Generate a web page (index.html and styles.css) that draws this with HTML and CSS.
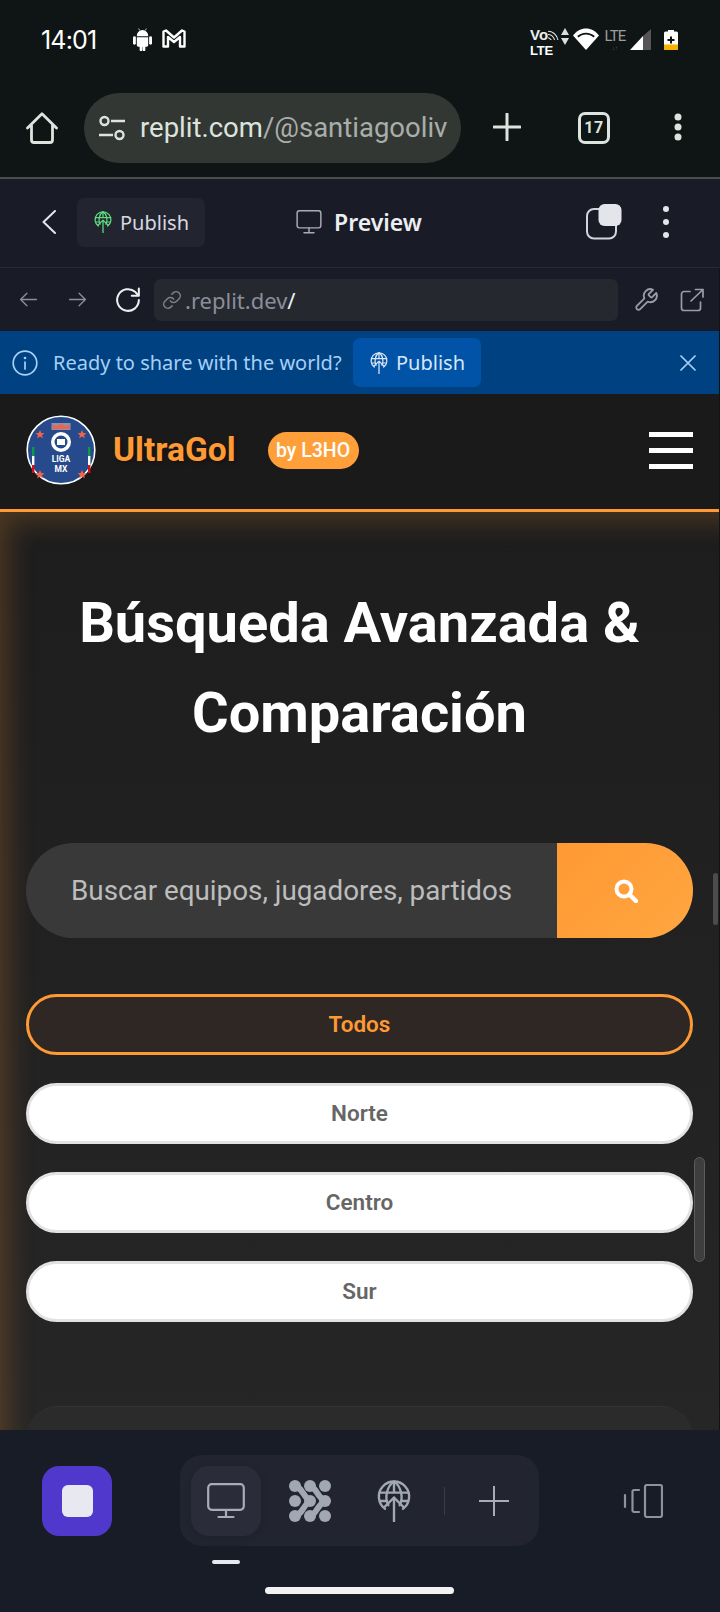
FILE: index.html
```html
<!DOCTYPE html>
<html lang="es">
<head>
<meta charset="utf-8">
<title>UltraGol</title>
<link rel="stylesheet" href="styles.css">
</head>
<body>
<svg class="defs" width="0" height="0" aria-hidden="true">
  <symbol id="globe-up" viewBox="0 0 24 30">
    <g fill="none" stroke="currentColor" stroke-width="1.7" stroke-linecap="round" stroke-linejoin="round">
      <path d="M5.6 20.6A10.8 10.8 0 1 1 18.4 20.6"/>
      <path d="M8 18C5 13 7 4 12 1.2 17 4 19 13 16 18"/>
      <path d="M12 1.2V9M1.6 9H22.4M2 15H7M17 15H22"/>
      <path d="M12 29.500V12.500M5 19.500 12 12.500l7 7"/>
    </g>
  </symbol>
  <symbol id="monitor" viewBox="0 0 38 36">
    <g fill="none" stroke="currentColor" stroke-width="2.2" stroke-linecap="round" stroke-linejoin="round">
      <rect x="1.2" y="1.2" width="35.6" height="25.6" rx="3.5"/>
      <path d="M19 27v6.5M11.5 34h15"/>
    </g>
  </symbol>
</svg>

<div class="phone">
  <header class="status">
    <span class="time">14:01</span>
    <svg class="ic-android" viewBox="0 0 20 24"><path fill="#fff" d="M4 8a6 6 0 0 1 12 0v.5H4zM4 9.500h12V18a1.500 1.500 0 0 1-1.500 1.500H13V23a1.400 1.400 0 0 1-2.800 0v-3.500H9.800V23A1.400 1.400 0 0 1 7 23v-3.500H5.500A1.500 1.500 0 0 1 4 18z"/><rect fill="#fff" x="0" y="8.500" width="3" height="9" rx="1.500"/><rect fill="#fff" x="17" y="8.500" width="3" height="9" rx="1.500"/><path stroke="#fff" stroke-width=".8" d="M6 .5 7 2.500M14 .5 13 2.500"/></svg>
    <svg class="ic-m" viewBox="0 0 24 19"><path fill="none" stroke="#fff" stroke-width="2.400" stroke-linejoin="round" d="M1.500 17.500V2.500L4 1.500l8 7 8-7 2.500 1v15h-4.500V8l-6 5-6-5v9.500z"/></svg>
    <div class="status-right">
      <div class="volte"><span class="vo">Vo<svg class="ic-cast" viewBox="0 0 10 10"><path fill="none" stroke="#ddd" stroke-width="1" d="M0 2c4 0 8 3 9 8M0 5c3 0 5 2 6 5M0 8c1 0 2 1 3 2"/></svg></span><span class="lte">LTE</span></div>
      <svg class="ic-updown" viewBox="0 0 8 17"><path fill="#ddd" d="M4 0l4 7H0zM0 10h8l-4 7z"/></svg>
      <svg class="ic-wifi" viewBox="0 0 26 22"><path fill="#fff" d="M13 22 0 7.500C3.500 3 8 .5 13 .5s9.500 2.500 13 7z"/><path fill="#0f1514" d="M13 4.800c-3.300 0-6.500 1.300-8.800 3.200l1.300 1.500C7.500 7.700 10.200 6.500 13 6.500s5.500 1.200 7.500 3l1.300-1.500C19.500 6.100 16.300 4.800 13 4.800z"/></svg>
      <div class="lte2"><span>LTE</span><i>↓↑</i></div>
      <svg class="ic-signal" viewBox="0 0 21 21"><path fill="#555" d="M21 0v21H13V7z"/><path fill="#fff" d="M13 7v14H0z"/></svg>
      <svg class="ic-batt" viewBox="0 0 14 20"><path fill="#fff" d="M4 0h6v1.500h2.500A1.500 1.500 0 0 1 14 3v15.500a1.500 1.500 0 0 1-1.500 1.500h-11A1.500 1.500 0 0 1 0 18.500V3a1.500 1.500 0 0 1 1.500-1.500H4z"/><path fill="#f5b400" d="M0 14.500h14v4a1.500 1.500 0 0 1-1.500 1.500h-11A1.500 1.500 0 0 1 0 18.500z"/><path fill="#111" d="M6 6.500h2v2.500h2.500v2H8v2.500H6V11H3.500V9H6z"/></svg>
    </div>
  </header>

  <div class="chrome">
    <svg class="ic-home" viewBox="0 0 32 32"><path fill="none" stroke="#dde3dd" stroke-width="2.800" stroke-linejoin="round" stroke-linecap="round" d="M1.500 16 16 1.800 30.500 16M5.500 13.500V28a2.500 2.500 0 0 0 2.500 2.500h16a2.500 2.500 0 0 0 2.500-2.500V13.500"/></svg>
    <div class="omnibox">
      <svg class="ic-tune" viewBox="0 0 26 26"><g fill="none" stroke="#dde3dd" stroke-width="2.400"><circle cx="5.500" cy="6" r="4"/><circle cx="20.500" cy="20" r="4"/><path d="M12 6h14M0 20h14"/></g></svg>
      <span class="url"><span class="url-host">replit.com</span>/@santiagooliv</span>
    </div>
    <svg class="ic-plus" viewBox="0 0 28 28"><path stroke="#dde3dd" stroke-width="3" stroke-linecap="round" d="M14 1v26M1 14h26"/></svg>
    <span class="tabs">17</span>
    <svg class="ic-dots" viewBox="0 0 8 28"><circle fill="#dde3dd" cx="4" cy="4" r="3.500"/><circle fill="#dde3dd" cx="4" cy="14" r="3.500"/><circle fill="#dde3dd" cx="4" cy="24" r="3.500"/></svg>
  </div>

  <div class="rp-bar">
    <svg class="ic-back" viewBox="0 0 14 24"><path fill="none" stroke="#e4e5ea" stroke-width="2" stroke-linecap="round" stroke-linejoin="round" d="M13 1 1.500 12 13 23"/></svg>
    <div class="rp-publish"><svg class="ic-globe green"><use href="#globe-up"/></svg><span>Publish</span></div>
    <div class="rp-preview"><svg class="ic-mon"><use href="#monitor"/></svg><span>Preview</span></div>
    <svg class="ic-tabs" viewBox="0 0 36 36"><rect x="1" y="5" width="29" height="29.500" rx="7" fill="none" stroke="#d4d5dc" stroke-width="2"/><rect x="12.500" y="0" width="23" height="22" rx="6" fill="#e4e5ea"/></svg>
    <svg class="ic-dots2" viewBox="0 0 6 32"><circle fill="#e4e5ea" cx="3" cy="3" r="3"/><circle fill="#e4e5ea" cx="3" cy="16" r="3"/><circle fill="#e4e5ea" cx="3" cy="29" r="3"/></svg>
  </div>

  <div class="rp-nav">
    <svg class="ic-nav" viewBox="0 0 24 24"><path fill="none" stroke="#8b8e99" stroke-width="1.700" stroke-linecap="round" stroke-linejoin="round" d="M22 12H2M10 4 2 12l8 8"/></svg>
    <svg class="ic-nav fwd" viewBox="0 0 24 24"><path fill="none" stroke="#8b8e99" stroke-width="1.700" stroke-linecap="round" stroke-linejoin="round" d="M2 12h20M14 4l8 8-8 8"/></svg>
    <svg class="ic-reload" viewBox="0 0 24 24"><path fill="none" stroke="#eeeef2" stroke-width="1.900" stroke-linecap="round" stroke-linejoin="round" d="M22 12a10 10 0 1 1-3.200-7.300L22 8M22 1.500V8h-6.500"/></svg>
    <div class="rp-url">
      <svg class="ic-link" viewBox="0 0 24 24"><path fill="none" stroke="#7d808b" stroke-width="1.800" stroke-linecap="round" d="M10 13a5 5 0 0 0 7.540.54l3-3a5 5 0 0 0-7.070-7.070l-1.720 1.710M14 11a5 5 0 0 0-7.540-.54l-3 3a5 5 0 0 0 7.070 7.070l1.710-1.710"/></svg>
      <span class="rp-dom">.replit.dev<b>/</b></span>
    </div>
    <svg class="ic-wrench" viewBox="0 0 24 24"><path fill="none" stroke="#9a9da8" stroke-width="1.700" stroke-linecap="round" stroke-linejoin="round" d="M14.700 6.300a1 1 0 0 0 0 1.400l1.600 1.600a1 1 0 0 0 1.400 0l3.770-3.770a6 6 0 0 1-7.940 7.940l-6.910 6.910a2.120 2.120 0 0 1-3-3l6.910-6.910a6 6 0 0 1 7.940-7.940z"/></svg>
    <svg class="ic-ext" viewBox="0 0 24 24"><path fill="none" stroke="#9a9da8" stroke-width="1.700" stroke-linecap="round" stroke-linejoin="round" d="M10 3.500H4A2.500 2.500 0 0 0 1.500 6v14A2.500 2.500 0 0 0 4 22.500h14a2.500 2.500 0 0 0 2.500-2.500v-6M11 13 23 1.500M15.500 1.500H23V9"/></svg>
  </div>

  <div class="notice">
    <svg class="ic-info" viewBox="0 0 26 26"><g fill="none" stroke="#a6d0f5" stroke-width="1.700" stroke-linecap="round"><circle cx="13" cy="13" r="11.800"/><path d="M13 12v7"/></g><circle fill="#a6d0f5" cx="13" cy="8" r="1.300"/></svg>
    <span class="notice-text">Ready to share with the world?</span>
    <div class="notice-btn"><svg class="ic-globe pale"><use href="#globe-up"/></svg><span>Publish</span></div>
    <svg class="ic-close" viewBox="0 0 16 16"><path stroke="#a6d0f5" stroke-width="1.700" stroke-linecap="round" d="M1 1l14 14M15 1 1 15"/></svg>
  </div>

  <div class="site-header">
    <svg class="logo" viewBox="0 0 70 70">
      <circle cx="35" cy="35" r="33.800" fill="#264a8c" stroke="#fff" stroke-width="1.600"/>
      <rect x="25.500" y="8" width="19" height="7" fill="#8a93b5"/>
      <path fill="#f0634a" d="M26.500 14V9l4 2.500L35 8.500l4.500 3 4-2.500v5z"/>
      <path fill="#f0634a" d="M14 15l1.300 3 3.200.2-2.500 2 .9 3.100-2.900-1.800-2.900 1.800.9-3.100-2.500-2 3.200-.2zM56 15l1.300 3 3.200.2-2.500 2 .9 3.100-2.900-1.800-2.900 1.800.9-3.100-2.500-2 3.200-.2zM14 55l1.300 3 3.200.2-2.500 2 .9 3.100-2.900-1.800-2.900 1.800.9-3.100-2.500-2 3.200-.2zM56 55l1.300 3 3.200.2-2.500 2 .9 3.100-2.900-1.800-2.900 1.800.9-3.100-2.500-2 3.200-.2z"/>
      <circle cx="35" cy="27" r="10" fill="#fff"/>
      <circle cx="35" cy="27" r="6.500" fill="#264a8c"/>
      <rect x="31" y="24" width="8" height="6" fill="#fff"/>
      <rect x="6" y="32" width="2.400" height="9" fill="#0a9a4a"/><rect x="6" y="41" width="2.400" height="9" fill="#fff"/><rect x="6" y="50" width="2.400" height="8" fill="#d5101c"/>
      <rect x="62" y="32" width="2.400" height="9" fill="#0a9a4a"/><rect x="62" y="41" width="2.400" height="9" fill="#fff"/><rect x="62" y="50" width="2.400" height="8" fill="#d5101c"/>
      <text class="logo-t" x="35" y="47" text-anchor="middle">LIGA</text>
      <text class="logo-t" x="35" y="57" text-anchor="middle">MX</text>
    </svg>
    <span class="brand">UltraGol</span>
    <span class="badge">by L3HO</span>
    <div class="burger"><i></i><i></i><i></i></div>
  </div>

  <main class="content">
    <h1 class="title">Búsqueda Avanzada &amp; Comparación</h1>
    <div class="search">
      <span class="search-ph">Buscar equipos, jugadores, partidos</span>
      <div class="search-btn"><svg class="ic-search" viewBox="0 0 24 24"><circle cx="10" cy="10" r="7.500" fill="none" stroke="#fff" stroke-width="4"/><path stroke="#fff" stroke-width="4.500" stroke-linecap="round" d="M16 16l6 6"/></svg></div>
    </div>
    <div class="filters">
      <button class="chip chip-on">Todos</button>
      <button class="chip">Norte</button>
      <button class="chip">Centro</button>
      <button class="chip">Sur</button>
    </div>
    <div class="card"></div>
    <i class="thumb thumb-a"></i>
    <i class="thumb thumb-b"></i>
  </main>

  <footer class="dock">
    <div class="dock-row">
      <div class="stop"><i></i></div>
      <div class="tools">
        <div class="tool tool-on"><svg class="ic-tool-mon"><use href="#monitor"/></svg></div>
        <div class="tool">
          <svg class="ic-agent" viewBox="0 0 42 42">
            <g fill="#a1a7b3"><circle cx="6" cy="21" r="6"/><circle cx="36" cy="6" r="6"/><circle cx="36" cy="36" r="6"/><circle cx="6" cy="6" r="6"/><circle cx="6" cy="36" r="6"/><circle cx="21" cy="6" r="6"/><circle cx="21" cy="36" r="6"/><circle cx="36" cy="21" r="6"/><circle cx="21" cy="21" r="6"/></g>
            <g fill="none" stroke="#a1a7b3" stroke-width="6" stroke-linecap="round"><path d="M6 6C14 8 12 14 21 21 12 28 14 34 6 36"/><path d="M21 6C28 8 27 16 36 21 27 26 28 34 21 36"/></g>
          </svg>
        </div>
        <div class="tool"><svg class="ic-tool-globe"><use href="#globe-up"/></svg></div>
        <i class="sep"></i>
        <svg class="ic-tool-plus" viewBox="0 0 30 30"><path stroke="#a9acb6" stroke-width="2" stroke-linecap="round" d="M15 0v30M0 15h30"/></svg>
      </div>
      <svg class="ic-device" viewBox="0 0 40 34"><g fill="none" stroke="#8f929d" stroke-width="2.200" stroke-linecap="round" stroke-linejoin="round"><rect x="22" y="1" width="17" height="32" rx="2"/><path d="M16 6h-5a1.500 1.500 0 0 0-1.500 1.500v19A1.500 1.500 0 0 0 11 28h5M2 11v12"/></g></svg>
    </div>
    <i class="tab-mark"></i>
    <i class="home-bar"></i>
  </footer>
</div>
</body>
</html>
```

FILE: styles.css
```css
* { box-sizing: border-box; }
html, body { margin: 0; padding: 0; background: #0f1514; }
svg { display: block; flex: none; }
.defs { position: absolute; }
i { display: block; font-style: normal; }

.phone {
  width: 720px;
  height: 1612px;
  display: flex;
  flex-direction: column;
  overflow: hidden;
  position: relative;
  font-family: "Noto Sans", sans-serif;
}

/* Android status bar */
.status {
  height: 93px;
  flex: none;
  display: flex;
  align-items: flex-start;
  padding: 27px 42px 0 41px;
  color: #fff;
}
.time { font: 400 25px/26px Inter, sans-serif; letter-spacing: -0.8px; width: 92px; }
.ic-android { width: 19px; height: 23px; margin-top: 1px; }
.ic-m { width: 24px; height: 19px; margin: 2px 0 0 10px; }
.status-right { margin-left: auto; display: flex; align-items: flex-start; }
.volte { width: 31px; display: flex; flex-direction: column; font: 700 15px/14px "Liberation Sans", sans-serif; }
.vo { display: flex; align-items: center; height: 15px; color: #eee; }
.ic-cast { width: 11px; height: 11px; margin-left: 0; }
.lte { font-size: 13px; line-height: 13px; margin-top: 2px; letter-spacing: -.2px; color: #fff; }
.ic-updown { width: 8px; height: 17px; margin-top: 1px; }
.ic-wifi { width: 26px; height: 22px; margin: 1px 0 0 4px; }
.lte2 { width: 22px; margin: 2px 4px 0 5px; display: flex; flex-direction: column; align-items: center; font: 400 15px/14px Roboto, sans-serif; letter-spacing: -.8px; color: #9a9d9c; }
.lte2 i { font-size: 6px; line-height: 7px; letter-spacing: 0; color: #555; margin-top: 1px; }
.ic-signal { width: 21px; height: 21px; margin: 2px 0 0 0; }
.ic-batt { width: 14px; height: 20px; margin: 3px 0 0 13px; }

/* Browser toolbar */
.chrome {
  height: 86px;
  flex: none;
  display: flex;
  align-items: flex-start;
  padding-left: 26px;
  border-bottom: 2px solid #4a4f4b;
}
.ic-home { width: 32px; height: 32px; margin-top: 19px; }
.omnibox {
  width: 377px;
  height: 70px;
  margin-left: 26px;
  border-radius: 35px;
  background: #323733;
  display: flex;
  align-items: center;
  padding-left: 15px;
  overflow: hidden;
}
.ic-tune { width: 26px; height: 26px; }
.url { margin-left: 15px; width: 308px; overflow: hidden; white-space: nowrap; font: 400 27.500px/34px Roboto, sans-serif; color: #a9aeaa; }
.url-host { color: #dde3dd; }
.ic-plus { width: 28px; height: 28px; margin: 20px 0 0 32px; }
.tabs {
  width: 32px;
  height: 32px;
  margin: 19px 0 0 57px;
  border: 3px solid #dde3dd;
  border-radius: 7px;
  color: #dde3dd;
  font: 700 16px/26px Roboto, sans-serif;
  letter-spacing: .6px;
  text-align: center;
}
.ic-dots { width: 8px; height: 28px; margin: 20px 0 0 64px; }

/* Replit header */
.rp-bar {
  height: 89px;
  flex: none;
  display: flex;
  align-items: center;
  padding: 0 0 2px 42px;
  background: #191c26;
  border-bottom: 1px solid #262935;
}
.ic-back { width: 14px; height: 24px; }
.rp-publish {
  width: 128px;
  height: 49px;
  margin-left: 21px;
  display: flex;
  align-items: center;
  gap: 8px;
  padding-left: 17px;
  border-radius: 7px;
  background: #22252f;
  color: #d6d8e0;
  font-size: 20px;
}
.ic-globe { width: 18px; height: 22px; }
.green { color: #5fdc80; }
.pale { color: #dbe6f5; }
.rp-preview { display: flex; align-items: center; gap: 12px; margin-left: 91px; color: #eceef2; font-size: 23px; font-weight: 600; }
.ic-mon { width: 26px; height: 24px; color: #a9acb6; }
.ic-tabs { width: 36px; height: 36px; margin-left: 164px; }
.ic-dots2 { width: 6px; height: 32px; margin-left: 41px; }

/* Replit webview nav */
.rp-nav {
  height: 63px;
  flex: none;
  display: flex;
  align-items: center;
  padding-left: 19px;
  background: #191c26;
  margin-right: 1px;
}
.ic-nav { width: 19px; height: 19px; }
.fwd { margin-left: 30px; }
.ic-reload { width: 26px; height: 26px; margin-left: 28px; }
.rp-url {
  width: 464px;
  height: 42px;
  margin-left: 13px;
  display: flex;
  align-items: center;
  padding-left: 8px;
  border-radius: 7px;
  background: #262830;
}
.ic-link { width: 20px; height: 20px; }
.rp-dom { margin-left: 3px; color: #8b8e99; font-size: 22px; }
.rp-dom b { font-weight: 400; color: #eceef2; }
.ic-wrench { width: 26px; height: 26px; margin-left: 15px; }
.ic-ext { width: 24px; height: 24px; margin-left: 21px; }

/* Publish notice */
.notice {
  height: 63px;
  flex: none;
  display: flex;
  align-items: center;
  padding-left: 12px;
  background: #004182;
  margin-right: 1px;
}
.ic-info { width: 26px; height: 26px; }
.notice-text { margin-left: 15px; width: 300px; white-space: nowrap; font-size: 20px; color: #a6d0f5; }
.notice-btn {
  width: 128px;
  height: 49px;
  display: flex;
  align-items: center;
  gap: 8px;
  padding-left: 17px;
  border-radius: 7px;
  background: #0053a6;
  color: #d7e6f7;
  font-size: 20px;
}
.ic-close { width: 16px; height: 16px; margin-left: 199px; }

/* Site header */
.site-header {
  height: 118px;
  flex: none;
  display: flex;
  align-items: center;
  padding: 0 26px 3px 26px;
  margin-right: 1px;
  background: #1a1a1a;
  border-bottom: 3px solid #ff9933;
}
.logo { width: 70px; height: 70px; margin-top: -1px; }
.logo-t { font: 700 8.500px Roboto, sans-serif; fill: #fff; }
.brand {
  margin-left: 17px;
  font: 700 33.500px/40px Roboto, sans-serif;
  color: #ff9933;
  text-shadow: 2px 2px 4px rgba(0,0,0,.3);
}
.badge {
  margin-left: 32px;
  width: 91px;
  height: 37px;
  border-radius: 19px;
  background: #ff9f3a;
  color: #fff;
  font: 500 19.500px/37px Roboto, sans-serif;
  text-align: center;
}
.burger { margin-left: auto; width: 44px; display: flex; flex-direction: column; gap: 11px; }
.burger i { height: 5px; background: #fff; }

/* Page */
.content {
  flex: 1;
  min-height: 0;
  overflow: hidden;
  position: relative;
  margin-right: 1px;
  padding: 66px 26px 0 26px;
  background: linear-gradient(180deg, #1d1d1d 0%, #262626 100%);
  box-shadow: inset 24px 24px 28px -16px rgba(255,153,51,.22);
}
.title {
  margin: 0 0 85px 0;
  font: 700 56px/90px Roboto, sans-serif;
  color: #fff;
  text-align: center;
}
.search {
  height: 95px;
  display: flex;
  border-radius: 48px;
  overflow: hidden;
  background: #393939;
}
.search-ph {
  flex: 1;
  padding-left: 45px;
  font: 400 27.800px/95px Roboto, sans-serif;
  color: #bdbdbd;
  white-space: nowrap;
  overflow: hidden;
}
.search-btn {
  width: 136px;
  display: flex;
  align-items: center;
  justify-content: center;
  background: linear-gradient(135deg, #ff9933, #ffa640);
  padding-left: 2px;
}
.ic-search { width: 24px; height: 24px; }
.filters { margin-top: 56px; display: flex; flex-direction: column; gap: 28px; }
.chip {
  height: 61px;
  padding: 0;
  border: 3px solid #e2e2e2;
  border-radius: 31px;
  background: #fff;
  color: #666;
  font: 600 22.500px/1 Roboto, sans-serif;
  text-align: center;
}
.chip-on { border-color: #ff9933; background: #2e2723; color: #ff9933; }
.card {
  height: 80px;
  margin-top: 84px;
  border-radius: 32px 32px 0 0;
  background: #2b2b2b;
  border-top: 1px solid #333;
}
.thumb { position: absolute; border-radius: 3px; background: #4c4c4c; }
.thumb-a { left: 713px; top: 361px; width: 5px; height: 52px; }
.thumb-b { left: 694px; top: 645px; width: 11px; height: 105px; border-radius: 6px; border: 1px solid #5c5c5c; background: #3e3e3e; }

/* Dock */
.dock { height: 182px; flex: none; background: #181c26; position: relative; padding: 25px 0 0 42px; }
.dock-row { display: flex; align-items: flex-start; }
.stop {
  width: 70px;
  height: 70px;
  margin-top: 11px;
  border-radius: 17px;
  background: #5138cc;
  display: flex;
  align-items: center;
  justify-content: center;
}
.stop i { width: 31px; height: 32px; border-radius: 6px; background: #e8e8f0; }
.tools {
  width: 359px;
  height: 91px;
  margin-left: 68px;
  border-radius: 22px;
  background: #22252f;
  display: flex;
  align-items: center;
  padding-left: 11px;
}
.tool { width: 70px; height: 70px; display: flex; align-items: center; justify-content: center; margin-right: 14px; border-radius: 18px; }
.tool-on { background: #2a2d39; box-shadow: 0 2px 8px rgba(0,0,0,.12); }
.ic-tool-mon { width: 38px; height: 36px; color: #a9acb6; }
.ic-agent { width: 42px; height: 42px; }
.ic-tool-globe { width: 34px; height: 42px; color: #a1a7b3; }
.sep { width: 1px; height: 28px; margin-left: 1px; background: #3a3d49; }
.ic-tool-plus { width: 30px; height: 30px; margin-left: 34px; }
.ic-device { width: 40px; height: 34px; margin: 29px 0 0 84px; }
.tab-mark { position: absolute; left: 212px; top: 130px; width: 28px; height: 4px; border-radius: 2px; background: #e8e8f0; }
.home-bar { position: absolute; left: 265px; top: 157px; width: 189px; height: 7px; border-radius: 4px; background: #f2f2f2; }
```
